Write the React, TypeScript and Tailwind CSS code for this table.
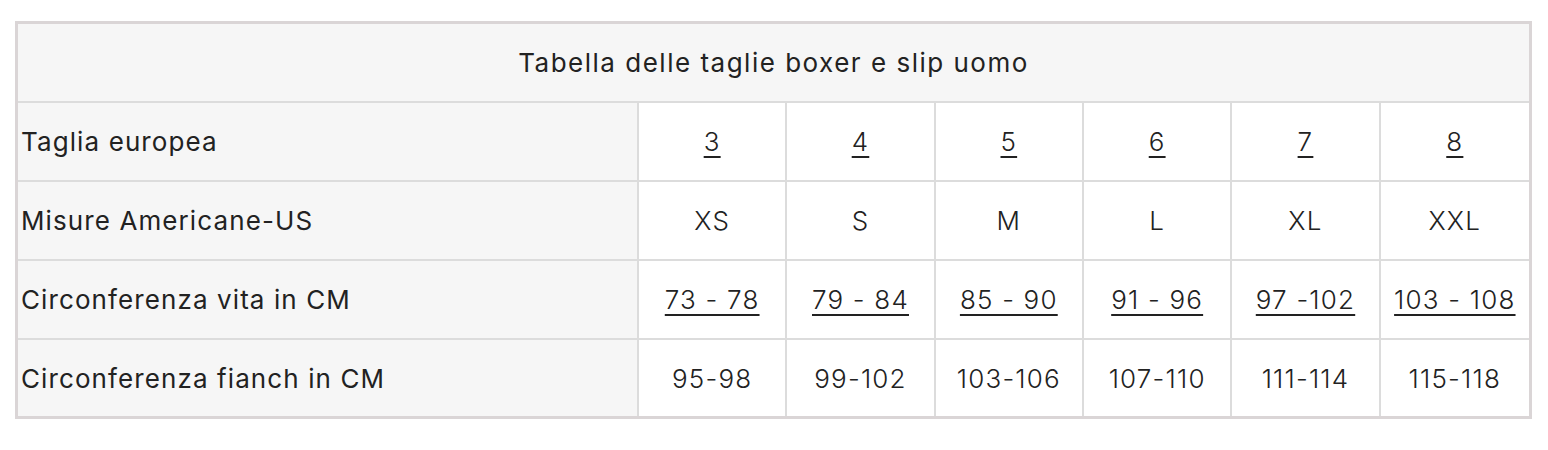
import React from 'react'

const rows = [
  { label: 'Taglia europea', values: ['3', '4', '5', '6', '7', '8'], link: true },
  { label: 'Misure Americane-US', values: ['XS', 'S', 'M', 'L', 'XL', 'XXL'], link: false },
  {
    label: 'Circonferenza vita in CM',
    values: ['73 - 78', '79 - 84', '85 - 90', '91 - 96', '97 -102', '103 - 108'],
    link: true,
  },
  {
    label: 'Circonferenza fianch in CM',
    values: ['95-98', '99-102', '103-106', '107-110', '111-114', '115-118'],
    link: false,
  },
]

const App = () => {
  return (
    <div className="min-h-[450px] bg-white pt-[21px] pl-[15px] font-['Inter',sans-serif] text-[#222] text-[26px] tracking-[1.5px]">
      <div className="w-[1517px] border-[3px] border-[#dad5d6]">
        <div className="h-[79px] flex items-center justify-center bg-[#f6f6f6] border-b-2 border-[#dcdcdc]">
          Tabella delle taglie boxer e slip uomo
        </div>
        {rows.map((row, i) => (
          <div
            key={row.label}
            className={`grid grid-cols-[621px_repeat(6,1fr)] ${
              i < rows.length - 1 ? 'h-[79px] border-b-2 border-[#dcdcdc]' : 'h-[76px]'
            }`}
          >
            <div className="flex items-center pl-[3px] bg-[#f6f6f6] border-r-2 border-[#dcdcdc] tracking-[1.1px]">
              {row.label}
            </div>
            {row.values.map((v, j) => (
              <div
                key={j}
                className={`flex items-center justify-center bg-white font-light tracking-[1.2px] ${
                  j < 5 ? 'border-r-2 border-[#dcdcdc]' : ''
                }`}
              >
                {row.link ? (
                  <a href="#" className="underline underline-offset-[5px] decoration-[1.5px]">
                    {v}
                  </a>
                ) : (
                  v
                )}
              </div>
            ))}
          </div>
        ))}
      </div>
    </div>
  )
}

export default App
